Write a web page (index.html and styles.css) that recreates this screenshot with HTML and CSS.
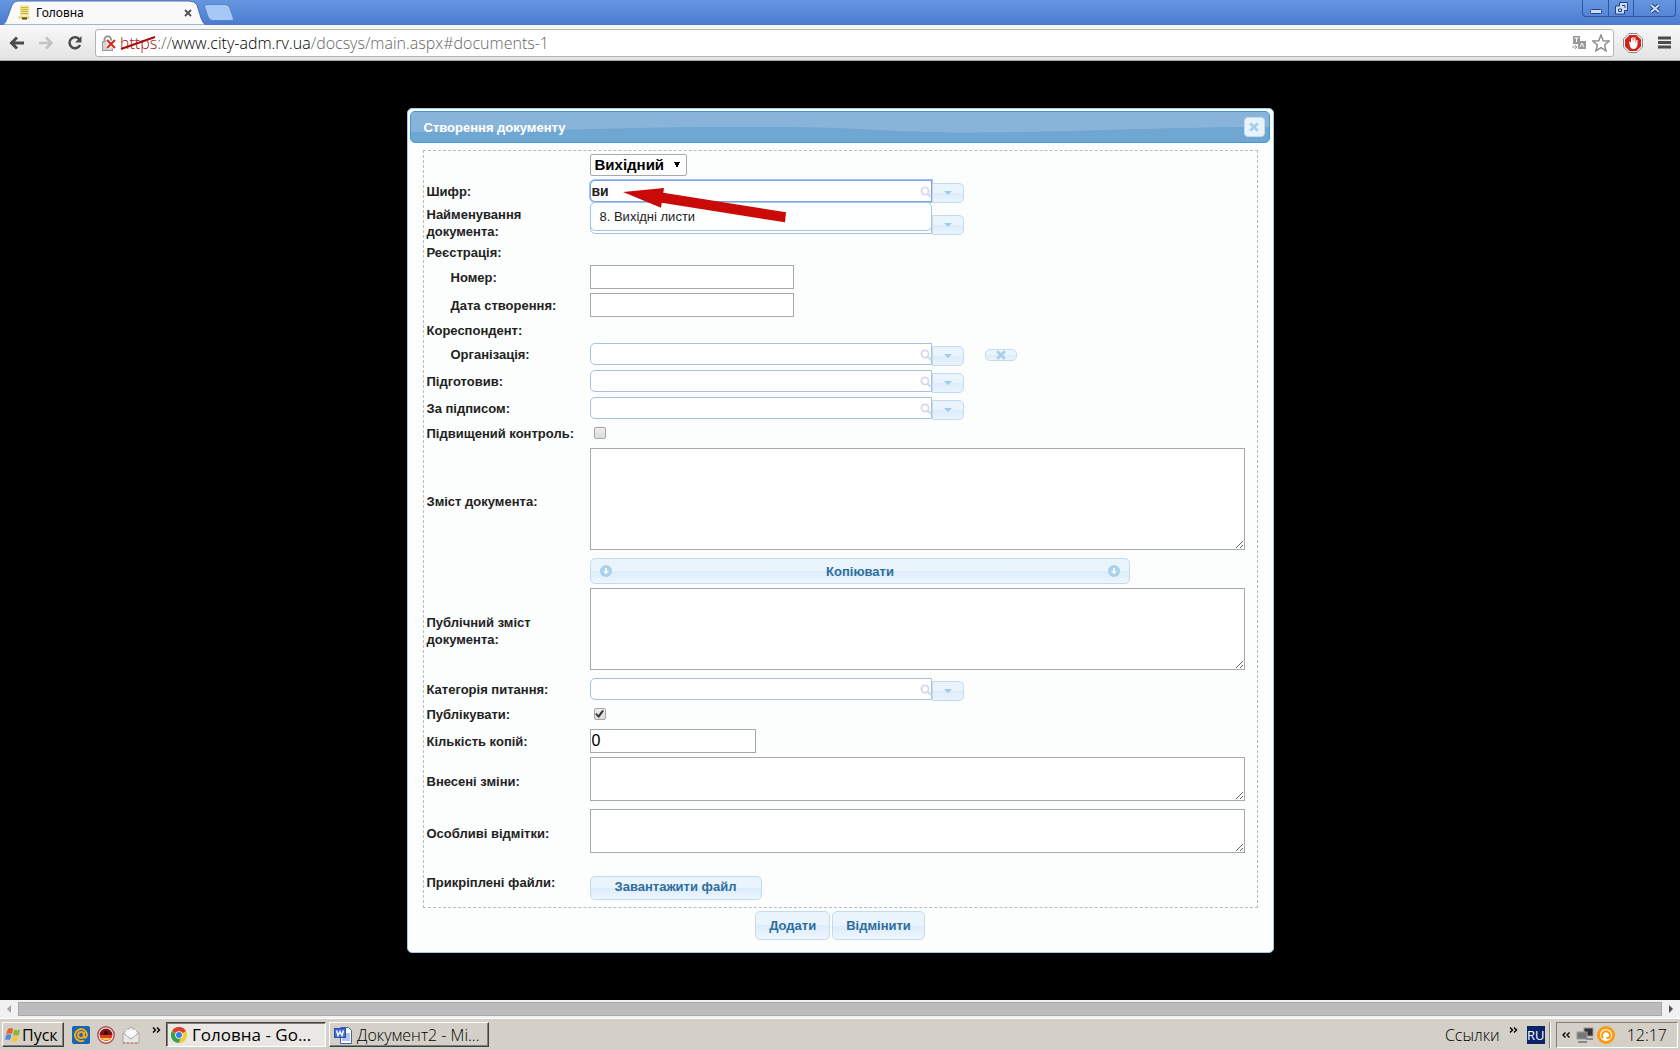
FILE: index.html
```html
<!DOCTYPE html>
<html lang="uk">
<head>
<meta charset="utf-8">
<title>Головна</title>
<link rel="stylesheet" href="styles.css">
</head>
<body>
<svg class="sprite" aria-hidden="true">
  <symbol id="i-search" viewBox="0 0 12 12"><circle cx="5" cy="5" r="3.6" fill="none" stroke="#d3dae8" stroke-width="1.8"/><path d="M7.6 7.6L11 11" stroke="#d3dae8" stroke-width="2.2"/></symbol>
  <symbol id="i-down" viewBox="0 0 8 4"><path d="M0 0h8L4 4z" fill="#9fcbe8"/></symbol>
  <symbol id="i-close" viewBox="0 0 10 10"><path d="M1.2 1.2l7.6 7.6M8.8 1.2L1.2 8.8" stroke="#a6cfe9" stroke-width="2.8"/></symbol>
  <symbol id="i-circle-down" viewBox="0 0 12 12"><circle cx="6" cy="6" r="6" fill="#a9d1ea"/><path d="M5 3h2v3h2L6 9.4 3 6h2z" fill="#f4fafe"/></symbol>
</svg>

<header class="tabs">
  <div class="tab">
    <svg class="tab-shape" width="204" height="25" viewBox="0 0 204 25"><path d="M0 25C4 23 4 21 6 16L10 5Q12 1 16 1H187Q193 1 195 5L199 18Q201 24 204 25z" fill="#f9f9f9" stroke="#4a6fae"/></svg>
    <svg class="tab-icon" width="13" height="15" viewBox="0 0 13 14"><path d="M2 0h9v10H2z" fill="#f3e584"/><path d="M3 2h7M3 4h7M3 6h7M3 8h7" stroke="#c8b34c"/><path d="M0 11h11l1 2H1z" fill="#e6cf58"/><path d="M4 13h5" stroke="#54461c" stroke-width="2"/></svg>
    <span class="tab-title">Головна</span>
    <button class="tab-close" aria-label="Закрити вкладку"><svg width="8" height="8" viewBox="0 0 8 8"><path d="M1 1l6 6M7 1L1 7" stroke="#555" stroke-width="2"/></svg></button>
  </div>
  <button class="new-tab" aria-label="Нова вкладка"><svg width="32" height="17" viewBox="0 0 30 16"><path d="M4 .5H21Q24 .5 25 3L28.500 13Q29 15.500 27 15.500H9Q6 15.500 5 13L1.500 3Q1 .5 4 .5z" fill="#a5c8f5" stroke="#5783c8"/></svg></button>
  <div class="win-buttons">
    <button aria-label="Згорнути"><svg width="12" height="12" viewBox="0 0 12 12"><rect x=".5" y="7.500" width="11" height="4" rx="1" fill="#c8dcfa" stroke="#284379"/></svg></button>
    <button aria-label="Розгорнути"><svg width="13" height="13" viewBox="0 0 13 13"><path d="M4.500 .5h8v8h-3v3.500h-9v-8h4zM3.500 7h3v2.500h-3zM7 3.500h3V6" fill="#c8dcfa" stroke="#284379"/></svg></button>
    <button class="wide" aria-label="Закрити"><svg width="12" height="11" viewBox="0 0 12 11"><path d="M2 2l8 7M10 2L2 9" stroke="#284379" stroke-width="4"/><path d="M2 2l8 7M10 2L2 9" stroke="#c8dcfa" stroke-width="2"/></svg></button>
  </div>
</header>

<nav class="toolbar">
  <button aria-label="Назад"><svg width="16" height="14" viewBox="0 0 16 14"><path d="M15 7H3M8 1.500L2.500 7 8 12.500" fill="none" stroke="#4c4c4c" stroke-width="3"/></svg></button>
  <button aria-label="Вперед"><svg width="16" height="14" viewBox="0 0 16 14"><path d="M1 7h12M8 1.500L13.500 7 8 12.500" fill="none" stroke="#c3c3c3" stroke-width="2.500"/></svg></button>
  <button aria-label="Оновити"><svg width="16" height="16" viewBox="0 0 16 16"><path d="M12.500 4.500A5.500 5.500 0 1 0 13 10" fill="none" stroke="#4c4c4c" stroke-width="2.600"/><path d="M14.500 1v6.500H8z" fill="#4c4c4c"/></svg></button>
  <div class="address">
    <svg width="14" height="16" viewBox="0 0 14 16"><path d="M2.500 7V4.500a3 3 0 0 1 6.500 0V7" fill="none" stroke="#999" stroke-width="2"/><rect x=".5" y="6.500" width="10" height="9" fill="#d4d4d4" stroke="#999"/><path d="M5 5l8 8M13 5l-8 8" stroke="#fff" stroke-width="4"/><path d="M5 5l8 8M13 5l-8 8" stroke="#d8231b" stroke-width="2"/></svg>
    <div class="url" role="textbox" aria-label="Адреса"><span class="scheme">https<svg width="36" height="14" viewBox="0 0 36 14"><path d="M1 13L35 1" stroke="#a80d0d" stroke-width="2"/></svg></span>://<span class="host">www.city-adm.rv.ua</span>/docsys/main.aspx#documents-1</div>
    <svg width="14" height="14" viewBox="0 0 14 14"><path d="M1 0h7v8H1zM6 5h8v8H6z" fill="#999"/><path d="M2.500 2h4M4.500 2v4M8 11l2-4 2 4" stroke="#fff" fill="none"/><path d="M0 11h5M3 9l2 2-2 2" stroke="#999" fill="none"/></svg>
    <svg width="18" height="18" viewBox="0 0 18 18"><path d="M9 1l2.200 5.700 6 .3-4.600 3.900 1.500 6L9 13.600 3.900 16.900l1.500-6L.8 7l6-.3z" fill="#fff" stroke="#8a8a8a" stroke-width="1.400"/></svg>
  </div>
  <button class="blocker" aria-label="AdBlock"><svg width="20" height="20" viewBox="0 0 20 20"><path d="M6 .5h8L19.500 6v8L14 19.500H6L.5 14V6z" fill="#fff" stroke="#888"/><path d="M6.600 2h6.800L18 6.600v6.800L13.400 18H6.600L2 13.400V6.600z" fill="#d6201c"/><path d="M6 9l1-.5 1 1.500V5h1v4l.5-5h1v5l1-4.500h1V10l1-3h1v5q-1 4-4 4T7 13z" fill="#fff"/></svg></button>
  <button aria-label="Меню"><svg width="13" height="13" viewBox="0 0 13 13"><path d="M0 2h13M0 6.500h13M0 11h13" stroke="#4c4c4c" stroke-width="3"/></svg></button>
</nav>

<main class="page">
  <section class="dialog" role="dialog" aria-labelledby="dialog-title">
    <div class="dialog-bar">
      <svg class="wave" viewBox="0 0 858 30" preserveAspectRatio="none"><path d="M0 20C150 20 180 15 330 15S460 20.500 560 20.500 740 15 858 15V0H0z" fill="#88b4d9"/></svg>
      <h1 id="dialog-title">Створення документу</h1>
      <button class="dialog-close" aria-label="Закрити"><svg width="10" height="10"><use href="#i-close"/></svg></button>
    </div>
    <form>
      <fieldset>
        <div class="row line">
          <label for="kind"></label>
          <select id="kind" aria-label="Тип документа"><option>Вихідний</option></select>
        </div>
        <div class="row combo-row">
          <label for="code">Шифр:</label>
          <div class="combo active">
            <input id="code" type="text" value="ви"><svg class="glass"><use href="#i-search"/></svg>
            <button type="button" aria-label="Показати всі"><svg width="8" height="4"><use href="#i-down"/></svg></button>
            <ul class="menu"><li>8. Вихідні листи</li></ul>
            <svg class="pointer" width="164" height="36" viewBox="0 0 164 36"><path d="M0 5L41 1 40.300 5.700 163 25.300 162 35.300 38.700 15.700 38 20.700z" fill="#c90a08"/></svg>
          </div>
        </div>
        <div class="row name-row">
          <label for="docname">Найменування документа:</label>
          <div class="combo">
            <input id="docname" type="text">
            <button type="button" aria-label="Показати всі"><svg width="8" height="4"><use href="#i-down"/></svg></button>
          </div>
        </div>
        <div class="row head"><span>Реєстрація:</span></div>
        <div class="row box-row sub"><label for="num">Номер:</label><input class="box" id="num" type="text"></div>
        <div class="row box-row sub"><label for="date">Дата створення:</label><input class="box" id="date" type="text"></div>
        <div class="row head"><span>Кореспондент:</span></div>
        <div class="row combo-row sub">
          <label for="org">Організація:</label>
          <div class="combo">
            <input id="org" type="text"><svg class="glass"><use href="#i-search"/></svg>
            <button type="button" aria-label="Показати всі"><svg width="8" height="4"><use href="#i-down"/></svg></button>
            <button type="button" class="remove" aria-label="Видалити"><svg width="10" height="10"><use href="#i-close"/></svg></button>
          </div>
        </div>
        <div class="row combo-row">
          <label for="prep">Підготовив:</label>
          <div class="combo">
            <input id="prep" type="text"><svg class="glass"><use href="#i-search"/></svg>
            <button type="button" aria-label="Показати всі"><svg width="8" height="4"><use href="#i-down"/></svg></button>
          </div>
        </div>
        <div class="row combo-row">
          <label for="sign">За підписом:</label>
          <div class="combo">
            <input id="sign" type="text"><svg class="glass"><use href="#i-search"/></svg>
            <button type="button" aria-label="Показати всі"><svg width="8" height="4"><use href="#i-down"/></svg></button>
          </div>
        </div>
        <div class="row check-row"><label for="ctrl">Підвищений контроль:</label><input id="ctrl" type="checkbox"></div>
        <div class="row area-row"><label for="text">Зміст документа:</label><textarea class="tall" id="text"></textarea></div>
        <div class="row copy-row">
          <span></span>
          <button type="button" class="btn copy"><svg width="12" height="12"><use href="#i-circle-down"/></svg>Копіювати<svg width="12" height="12"><use href="#i-circle-down"/></svg></button>
        </div>
        <div class="row area-row"><label for="pub">Публічний зміст документа:</label><textarea class="medium" id="pub"></textarea></div>
        <div class="row combo-row">
          <label for="cat">Категорія питання:</label>
          <div class="combo">
            <input id="cat" type="text"><svg class="glass"><use href="#i-search"/></svg>
            <button type="button" aria-label="Показати всі"><svg width="8" height="4"><use href="#i-down"/></svg></button>
          </div>
        </div>
        <div class="row check-row"><label for="publish">Публікувати:</label><input id="publish" type="checkbox" checked></div>
        <div class="row box-row"><label for="copies">Кількість копій:</label><input class="box short" id="copies" type="text" value="0"></div>
        <div class="row area-row"><label for="changes">Внесені зміни:</label><textarea id="changes"></textarea></div>
        <div class="row area-row"><label for="notes">Особливі відмітки:</label><textarea id="notes"></textarea></div>
        <div class="row file-row"><span>Прикріплені файли:</span><button type="button" class="btn upload">Завантажити файл</button></div>
      </fieldset>
      <div class="actions"><button type="button" class="btn">Додати</button><button type="button" class="btn">Відмінити</button></div>
    </form>
  </section>
</main>

<div class="scroll">
  <svg width="4" height="8" viewBox="0 0 4 8"><path d="M4 0v8L0 4z" fill="#a3a3a3"/></svg>
  <div class="thumb"></div>
  <svg width="4" height="8" viewBox="0 0 4 8"><path d="M0 0v8l4-4z" fill="#505050"/></svg>
</div>

<footer class="taskbar">
  <button class="raised start"><svg width="16" height="16" viewBox="0 0 16 16"><path d="M3 2q3-2 5 0L7 7Q4 6 1 7z" fill="#e8622a"/><path d="M9 2.500q3 1.500 6 0L14 8q-3 1-6 0z" fill="#86b83a"/><path d="M1 8q3-1.500 5.500 0L5 13Q3 12 0 13z" fill="#4b8be0"/><path d="M7.500 9q3 1.500 6 0L12 14q-3 1.500-5.500 0z" fill="#f7c62e"/></svg>Пуск</button>
  <div class="quick">
    <svg width="18" height="18" viewBox="0 0 18 18"><rect width="18" height="18" rx="2" fill="#1766b4"/><circle cx="9" cy="9" r="3" fill="none" stroke="#f5a81c" stroke-width="2"/><path d="M12 6v5q2 2 3-2a6 6 0 1 0-3 5.300" fill="none" stroke="#f5a81c" stroke-width="2"/></svg>
    <svg width="18" height="18" viewBox="0 0 18 18"><circle cx="9" cy="9" r="8.200" fill="#fff" stroke="#b04a4a" stroke-width="1.400"/><path d="M2.500 9a6.500 6.500 0 0 1 13 0z" fill="#7d1510"/><path d="M2.500 9h13a6.500 6 0 0 1-13 0z" fill="#e8371e"/><path d="M4 12h10a6 5 0 0 1-10 0z" fill="#f8d344"/><circle cx="9" cy="7" r="2" fill="#2b1010"/></svg>
    <svg width="18" height="18" viewBox="0 0 18 18"><path d="M1 7l8-6 8 6v10H1z" fill="#e7e7e5" stroke="#a9a9a6"/><path d="M4 4h10v7H4z" fill="#f8f8f6"/><path d="M1 7l8 6 8-6" fill="none" stroke="#a9a9a6"/><path d="M1 17h16" stroke="#d0604f" stroke-dasharray="2 2"/></svg>
  </div>
  <svg class="more" width="9" height="6" viewBox="0 0 9 6"><path d="M1 .5L3.500 3 1 5.500M5 .5L7.500 3 5 5.500" fill="none" stroke="#000" stroke-width="1.400"/></svg>
  <button class="task pressed"><svg width="16" height="16" viewBox="0 0 16 16"><circle cx="8" cy="8" r="8" fill="#f5cb29"/><path d="M8 8L1 4a8 8 0 0 1 14 0z" fill="#dd3d2c"/><path d="M1 4a8 8 0 0 0 6.500 12L10 11z" fill="#36a152"/><circle cx="8" cy="8" r="3.800" fill="#fff"/><circle cx="8" cy="8" r="3" fill="#3c7de0"/></svg><span>Головна - Go...</span></button>
  <button class="task raised"><svg width="18" height="18" viewBox="0 0 18 18"><path d="M6.500 1.500h8l3 3v13h-11z" fill="#fff" stroke="#3f62b5"/><path d="M12 8h4M12 10h4M8 14h8M8 12h8" stroke="#6e8bd0"/><rect x=".5" y="2.500" width="11" height="9" fill="#3f6fd6" stroke="#2c4da3"/><path d="M2.500 4.500l1.500 5 2-4 2 4 1.500-5" fill="none" stroke="#fff" stroke-width="1.400"/></svg><span>Документ2 - Mi...</span></button>
  <span class="links">Ссылки</span>
  <svg class="more" width="9" height="6" viewBox="0 0 9 6"><path d="M1 .5L3.500 3 1 5.500M5 .5L7.500 3 5 5.500" fill="none" stroke="#000" stroke-width="1.400"/></svg>
  <span class="lang">RU</span>
  <div class="divider"></div>
  <div class="tray">
    <svg width="9" height="6" viewBox="0 0 9 6"><path d="M3.500 .5L1 3l2.500 2.500M7.500 .5L5 3l2.500 2.500" fill="none" stroke="#000" stroke-width="1.400"/></svg>
    <svg class="net" width="18" height="16" viewBox="0 0 18 16"><rect x="8" y="1" width="9" height="8" fill="#333" stroke="#999"/><rect x="1" y="5" width="10" height="7" fill="#777" stroke="#999"/><path d="M2 15h9M10 12h7" stroke="#888" stroke-width="2"/></svg>
    <svg width="18" height="18" viewBox="0 0 18 18"><circle cx="9" cy="9" r="9" fill="#ff9a0c"/><circle cx="9" cy="9" r="6" fill="#fff"/><path d="M6 12a4 4 0 1 1 6 0H9.500" fill="none" stroke="#ff9a0c" stroke-width="2"/></svg>
    <time>12:17</time>
  </div>
</footer>
</body>
</html>
```

FILE: styles.css
```css
* { box-sizing: border-box; }
body {
  margin: 0;
  min-height: 100vh;
  display: flex;
  flex-direction: column;
  background: #000;
  color: #222;
  font: 13px/17px "Liberation Sans", Arial, sans-serif;
}
button { font: inherit; color: inherit; padding: 0; border: 0; background: none; }
svg { display: block; flex: none; }
.sprite { position: absolute; width: 0; height: 0; }

/* Browser frame */
.tabs {
  height: 25px;
  display: flex;
  align-items: center;
  background: linear-gradient(#6796e0, #4a7bd0);
  font: 12px/16px "Noto Sans", sans-serif;
  color: #000;
}
.tab {
  position: relative;
  flex: none;
  width: 204px;
  height: 25px;
  margin-left: 2px;
  padding: 0 14px 0 16px;
  display: flex;
  align-items: center;
  gap: 5px;
}
.tab-shape { position: absolute; left: 0; top: 0; }
.tab-icon, .tab-title, .tab-close { position: relative; }
.tab-title { flex: 1; }
.new-tab { margin-left: -3px; }
.win-buttons {
  margin: 0 4px 0 auto;
  align-self: flex-start;
  display: flex;
  height: 17px;
  border: 1px solid #31549b;
  border-top: 0;
  border-radius: 0 0 4px 4px;
}
.win-buttons button { width: 25px; display: grid; place-items: center; }
.win-buttons button + button { border-left: 1px solid #31549b; }
.win-buttons .wide { width: 42px; }

.toolbar {
  height: 36px;
  display: flex;
  align-items: center;
  gap: 13px;
  padding: 0 9px;
  background: linear-gradient(#f9f9f9, #e3e3e3);
  border-bottom: 1px solid #aaa;
}
.address {
  flex: 1;
  height: 28px;
  margin: 0 -4px 0 -1px;
  padding: 0 3px 0 6px;
  display: flex;
  align-items: center;
  gap: 6px;
  background: #fff;
  border: 1px solid #b4b4b4;
  border-radius: 3px;
}
.url { flex: 1; font: 300 16px/24px "Open Sans", "Noto Sans", sans-serif; color: #666; margin-left: -2px; }
.host { color: #000; }
.scheme { position: relative; color: #a80d0d; }
.scheme svg { position: absolute; left: 0; top: 4px; }
.blocker { margin-right: 2px; }

/* Dialog */
.page { flex: 1; padding: 47px 20px 20px; }
.dialog {
  width: 100%;
  max-width: 867px;
  margin: 0 auto;
  padding: 2px 3px 12px 2px;
  background: #fcfdfd;
  border: 1px solid #a6c9e2;
  border-radius: 5px;
}
.dialog-bar {
  position: relative;
  height: 32px;
  padding: 0 4px 0 13px;
  display: flex;
  align-items: center;
  justify-content: space-between;
  background: #6fa7d2;
  border: 1px solid #4297d7;
  border-radius: 5px;
}
.wave { position: absolute; left: 0; top: 0; width: 100%; height: 100%; border-radius: 4px; }
.dialog-bar h1 { position: relative; margin: 0; font-size: 13px; color: #fff; }
.dialog-close {
  position: relative;
  width: 21px;
  height: 20px;
  display: grid;
  place-items: center;
  background: #e8f3fc;
  border: 1px solid #c5dbec;
  border-radius: 4px;
}
form { padding: 7px 12px 0 13px; }
fieldset { margin: 0; padding: 1px 3px 2px; border: 1px dashed #bbb; min-width: 0; }
.row {
  display: grid;
  grid-template-columns: 163px minmax(0, 1fr);
  align-items: center;
  justify-items: start;
  font-weight: bold;
}
.row label { padding-right: 10px; }
.sub label { padding-left: 24px; }
.line { height: 26px; }
.combo-row { height: 27px; }
.name-row { height: 36px; }
.head { height: 22px; }
.box-row { height: 28px; }
.check-row { height: 24px; padding-bottom: 2px; }
.copy-row { height: 30px; }
.file-row { height: 46px; }

select {
  appearance: none;
  width: 97px;
  height: 22px;
  padding: 0 4px;
  border: 1px solid #a9a9a9;
  border-radius: 2px;
  color: #000;
  font: bold 15px/18px "Liberation Sans", Arial, sans-serif;
  background: conic-gradient(from -27deg at 50% 100%, #000 54deg, transparent 0) no-repeat 83px 7px / 6px 6px #fff;
}
.combo { position: relative; display: flex; align-items: flex-start; }
.combo input {
  width: 342px;
  height: 22px;
  padding: 0 18px 0 1px;
  border: 1px solid #a9c1de;
  border-radius: 5px 0 0 5px;
  background: #fff;
  color: #222;
  font: bold 14px/18px "Liberation Sans", Arial, sans-serif;
}
.active input { border-color: #7aa2ea; box-shadow: 0 0 0 1px #a3c1f5; }
.glass { width: 12px; height: 12px; margin: 6px 0 0 -12px; position: relative; }
.combo button {
  width: 32px;
  height: 20px;
  margin-top: 3px;
  display: grid;
  place-items: center;
  background: linear-gradient(#e9f4fd 50%, #dcecfa 50%, #e9f4fe);
  border: 1px solid #c5dbec;
  border-radius: 0 5px 5px 0;
}
.combo .remove { height: 12px; margin: 6px 0 0 21px; border-radius: 5px; }
.menu {
  position: absolute;
  z-index: 1;
  left: 0;
  top: 22px;
  width: 342px;
  height: 29px;
  margin: 0;
  padding: 5px 9px;
  list-style: none;
  font-weight: normal;
  background: #fdfefe;
  border: 1px solid #a6c9e2;
  border-radius: 5px;
}
.pointer { position: absolute; z-index: 2; left: 33px; top: 7px; }
.box {
  width: 204px;
  height: 24px;
  padding: 0 1px;
  border: 1px solid #a9a9a9;
  background: #fff;
  color: #000;
  font: 16px/20px "Liberation Sans", Arial, sans-serif;
}
.short { width: 166px; }
input[type="checkbox"] {
  appearance: none;
  display: grid;
  place-items: center;
  width: 12px;
  height: 12px;
  margin: 0 4px;
  border: 1px solid #a4a4a4;
  border-radius: 2px;
  background: linear-gradient(#eee, #dcdcdc);
}
input[type="checkbox"]:checked::after {
  content: "";
  width: 9px;
  height: 8px;
  background: #333;
  clip-path: polygon(0 50%, 20% 40%, 38% 62%, 80% 0, 100% 12%, 42% 100%);
}
textarea {
  display: block;
  width: 656px;
  max-width: calc(100% - 9px);
  height: 44px;
  margin: 2px 0 6px;
  border: 1px solid #a9a9a9;
  background: #fff;
}
.medium { height: 82px; }
.tall { height: 102px; }
.btn {
  height: 29px;
  padding: 0 13px;
  color: #2e6e9e;
  font-weight: bold;
  background: linear-gradient(#e9f4fd 50%, #dcecfa 50%, #edf6fe);
  border: 1px solid #c5dbec;
  border-radius: 5px;
}
.copy {
  width: 540px;
  height: 26px;
  padding: 0 8px 0 9px;
  display: flex;
  align-items: center;
  justify-content: space-between;
}
.upload { width: 172px; height: 24px; padding-bottom: 4px; align-self: end; margin-bottom: 5px; }
.actions { display: flex; justify-content: center; gap: 2px; padding: 3px 0 0; }

/* Scrollbar and taskbar */
.scroll {
  height: 18px;
  display: flex;
  align-items: center;
  gap: 7px;
  padding: 0 7px;
  background: #f1f1f1;
}
.thumb { flex: 1; height: 14px; background: #bcbcbc; border: 1px solid #a8a8a8; }
.taskbar {
  height: 32px;
  padding: 2px 2px 2px;
  display: flex;
  align-items: center;
  background: #d4d0c8;
  border-top: 1px solid #fff;
  font: 300 16px/20px "Open Sans", "Noto Sans", sans-serif;
  color: #000;
}
.raised { border: 1px solid; border-color: #fff #404040 #404040 #fff; box-shadow: inset -1px -1px #808080; }
.pressed {
  border: 1px solid;
  border-color: #404040 #fff #fff #404040;
  box-shadow: inset 1px 1px #808080;
  background: #eae8e4;
  font-size: 17px;
  font-weight: 400;
}
.start { width: 62px; height: 25px; padding-left: 2px; display: flex; align-items: center; gap: 1px; font-weight: 400; }
.quick { display: flex; gap: 7px; margin-left: 8px; }
.more { margin: 0 5px 10px 12px; }
.task { width: 160px; height: 25px; padding: 0 4px; display: flex; align-items: center; gap: 5px; white-space: nowrap; overflow: hidden; }
.task.raised { margin-left: 3px; }
.links { margin-left: auto; }
.links + .more { margin: 0 9px 10px; }
.lang { width: 18px; height: 18px; background: #0a246a; color: #fff; font-size: 13px; font-weight: 400; line-height: 18px; text-align: center; }
.divider { width: 2px; height: 26px; margin: 0 5px 0 4px; border-left: 1px solid #808080; border-right: 1px solid #fff; }
.tray {
  height: 26px;
  padding: 0 10px 0 5px;
  display: flex;
  align-items: center;
  gap: 3px;
  border: 1px solid;
  border-color: #808080 #fff #fff #808080;
}
.net { margin-left: 2px; }
.tray time { margin-left: 9px; }
```
